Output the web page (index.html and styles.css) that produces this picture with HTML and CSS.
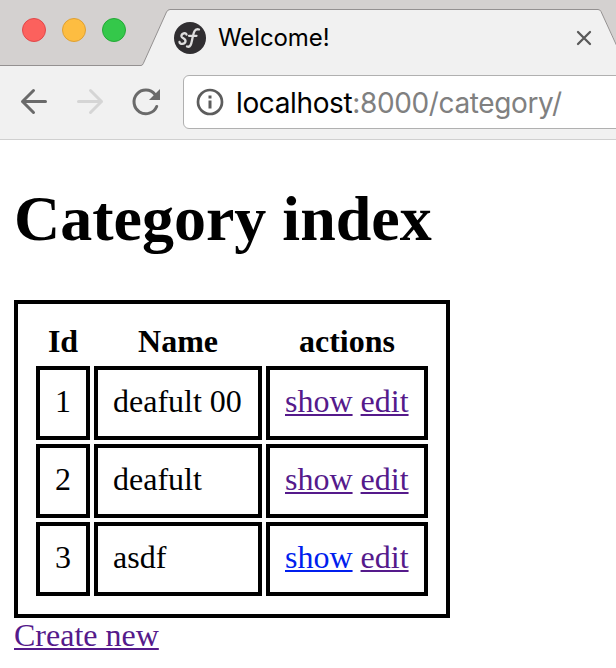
FILE: index.html
```html
<!DOCTYPE html>
<html lang="en">
<head>
<meta charset="utf-8">
<title>Welcome!</title>
<link rel="stylesheet" href="styles.css">
</head>
<body>
<header class="browser">
  <div class="tabstrip">
    <svg class="tab-shape" width="616" height="66" viewBox="0 0 616 66" aria-hidden="true">
      <path d="M0 0H616V43L601 11.500Q600 9.500 598 9.500H170Q167.800 9.500 166.500 12L143.300 63.500Q142.500 65.500 141 65.500H0Z" fill="#d4d1d0"/>
      <path d="M0 65.500H141Q142.500 65.500 143.300 63.500L166.500 12Q167.800 9.500 170 9.500H598Q600 9.500 601 11.500L626 66" fill="none" stroke="#949191"/>
    </svg>
    <div class="lights"><i class="light red"></i><i class="light yellow"></i><i class="light green"></i></div>
    <div class="tab">
      <svg class="favicon" width="32" height="32" viewBox="0 0 32 32" aria-hidden="true">
        <circle cx="16" cy="16" r="16" fill="#302e31"/>
        <path d="M12.500 12.500C12 10 7 11.500 7.500 14.500C8 16.500 12 16.500 11.500 19.500C11 22.500 5.500 22.500 5.500 20M13 24.500C17 26 17.500 20.500 18.500 16C19.500 11 20.500 6 25 7.500M15 13.800H22.500" fill="none" stroke="#dedede" stroke-width="2.300" stroke-linecap="round"/>
      </svg>
      <span class="tab-title">Welcome!</span>
      <svg class="close" width="16" height="16" viewBox="0 0 16 16" aria-hidden="true"><path d="M2 2L14 14M14 2L2 14" stroke="#5a5a5a" stroke-width="2.300" stroke-linecap="round"/></svg>
    </div>
  </div>
  <div class="toolbar">
    <svg class="nav" width="183" height="73" viewBox="0 66 183 73" fill="none" stroke-width="3" stroke-linecap="round" stroke-linejoin="round" aria-hidden="true">
      <path d="M45.500 101.500H22.500M33.500 90.500L22.500 101.500L33.500 112.500" stroke="#6a6a6a"/>
      <path d="M78.500 101.500H101.500M90.500 90.500L101.500 101.500L90.500 112.500" stroke="#d5d5d5"/>
      <path d="M156.700 106.500A11.800 11.800 0 1 1 155 94.500" stroke="#6a6a6a"/>
      <path d="M160 89V100H149Z" fill="#6a6a6a"/>
    </svg>
    <div class="address">
      <svg class="info" width="28" height="28" viewBox="0 0 28 28" aria-hidden="true"><circle cx="14" cy="14" r="12" fill="none" stroke="#5d5d5d" stroke-width="2.700"/><path d="M12.500 7.500H15.500V10.500H12.500ZM12.500 12.500H15.500V20.500H12.500Z" fill="#5d5d5d"/></svg>
      <span class="url"><span class="host">localhost</span><span class="path">:8000/category/</span></span>
    </div>
  </div>
</header>
<main>
  <h1>Category index</h1>
  <table>
    <colgroup><col class="col-id"><col class="col-name"><col class="col-actions"></colgroup>
    <thead><tr><th>Id</th><th>Name</th><th>actions</th></tr></thead>
    <tbody>
      <tr><td>1</td><td>deafult 00</td><td><a href="#">show</a> <a href="#">edit</a></td></tr>
      <tr><td>2</td><td>deafult</td><td><a href="#">show</a> <a href="#">edit</a></td></tr>
      <tr><td>3</td><td>asdf</td><td><a href="#" class="fresh">show</a> <a href="#">edit</a></td></tr>
    </tbody>
  </table>
  <a class="create" href="#">Create new</a>
</main>
</body>
</html>
```

FILE: styles.css
```css
* { box-sizing: border-box; }
body {
  margin: 0;
  width: 616px;
  height: 668px;
  overflow: hidden;
  background: #fff;
  color: #000;
  font: 32px/36px "Liberation Serif", serif;
}
.browser { height: 140px; background: #f1f1f1; border-bottom: 1px solid #d0d0d0; font-family: Inter, sans-serif; }
.tabstrip { position: relative; height: 66px; display: flex; }
.tab-shape { position: absolute; inset: 0; }
.lights { position: relative; display: flex; gap: 16px; padding: 18px 0 0 22px; width: 174px; }
.light { width: 24px; height: 24px; border-radius: 50%; border: 1px solid; }
.red { background: #fc615d; border-color: #e1484a; }
.yellow { background: #fdbd41; border-color: #dfa033; }
.green { background: #34c84a; border-color: #24a936; }
.tab { position: relative; flex: 1; height: 56px; margin-top: 10px; padding-right: 24px; display: flex; align-items: center; }
.favicon { flex: none; }
.tab-title { margin-left: 12px; font-size: 24px; line-height: 30px; letter-spacing: -0.1px; }
.close { margin-left: auto; }
.toolbar { height: 73px; display: flex; }
.nav { flex: none; }
.address {
  flex: 1;
  height: 54px;
  margin: 9px -10px 0 0;
  padding-left: 12px;
  display: flex;
  align-items: center;
  background: #fff;
  border: 1px solid #b0b0b0;
  border-radius: 6px;
}
.info { flex: none; }
.url { margin-left: 12px; padding-top: 2px; font-size: 28px; line-height: 34px; letter-spacing: -0.37px; white-space: nowrap; }
.path { color: #808080; }
main { padding: 42px 14px 0; }
h1 { margin: 0 0 44px; font-size: 64px; line-height: 74px; font-weight: bold; }
table { width: 436px; table-layout: fixed; border: 4px solid #000; border-spacing: 4px; padding: 14px; border-collapse: separate; }
.col-id { width: 54px; }
.col-name { width: 168px; }
.col-actions { width: 162px; }
th { height: 40px; padding: 0 0 2px; text-align: center; }
td { height: 74px; padding: 13px 15px 17px; border: 4px solid #000; white-space: nowrap; }
a { color: #551a8b; text-decoration: underline; text-decoration-thickness: 2px; text-underline-offset: 2px; }
a.fresh { color: #001eee; }
.create { display: block; width: max-content; margin-top: -1px; }
```
